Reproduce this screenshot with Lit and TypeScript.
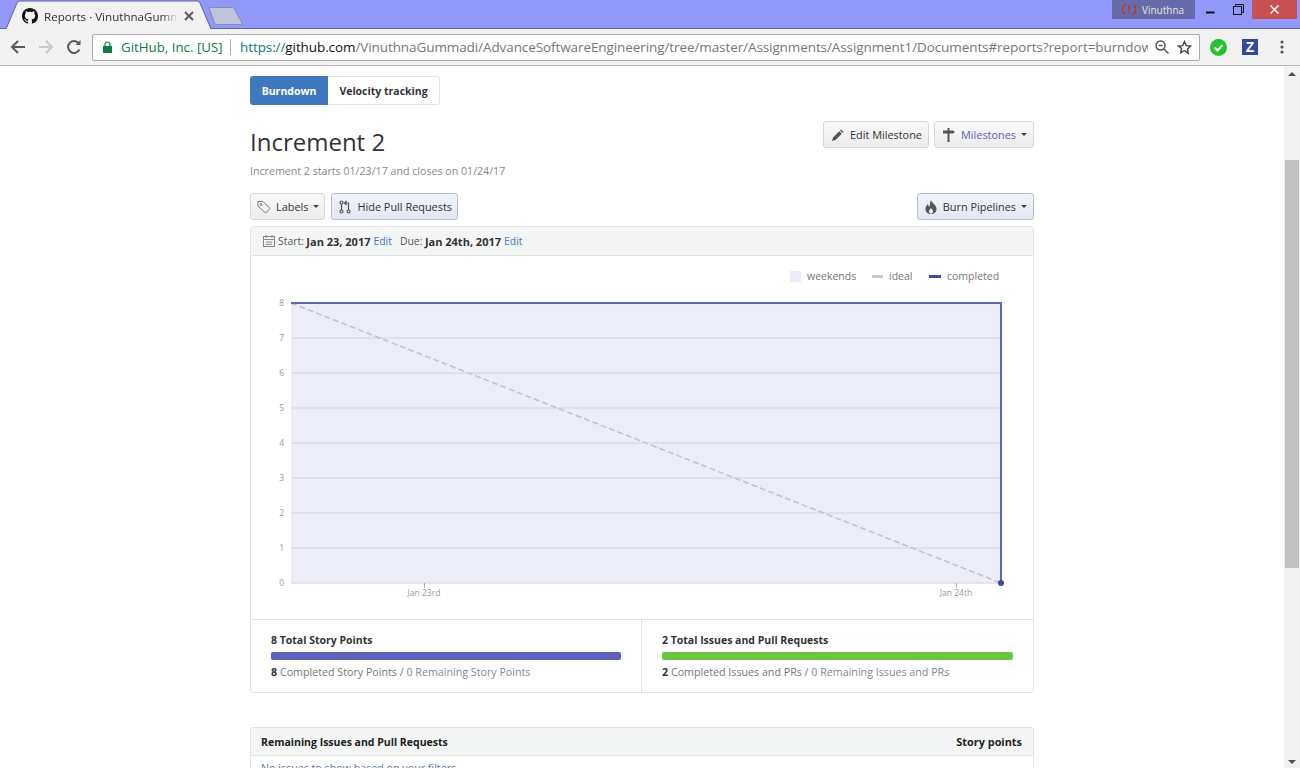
import { LitElement, html, css, svg } from 'lit';
import { customElement } from 'lit/decorators.js';

@customElement('browser-chrome')
export class BrowserChrome extends LitElement {
  static styles = css`
    :host {
      display: block;
      font-family: 'Open Sans', 'Noto Sans', sans-serif;
    }
    .titlebar {
      height: 28px;
      background: #9297fa;
      border-bottom: 1px solid #5c61a8;
      display: flex;
      position: relative;
    }
    .tab {
      position: relative;
      width: 205px;
      height: 29px;
      margin-left: 6px;
      display: flex;
      align-items: center;
      padding: 3px 0 0 16px;
      box-sizing: border-box;
      z-index: 1;
    }
    .tab-shape {
      position: absolute;
      left: 0;
      top: 0;
    }
    .gh {
      position: relative;
      width: 16px;
      height: 16px;
      margin-right: 6px;
      flex: none;
    }
    .tab-title {
      position: relative;
      width: 134px;
      overflow: hidden;
      white-space: nowrap;
      font-size: 11.6px;
      color: #333;
      -webkit-mask-image: linear-gradient(90deg, #000 88%, transparent);
      mask-image: linear-gradient(90deg, #000 88%, transparent);
    }
    .tab-close {
      position: relative;
      margin-left: 6px;
      width: 10px;
      height: 10px;
    }
    .newtab {
      margin: 6px 0 0 -3px;
      width: 36px;
      height: 20px;
    }
    .spacer {
      flex: 1;
    }
    .profile {
      width: 83px;
      height: 19px;
      background: #666ba9;
      color: #e4e4e4;
      font-size: 10px;
      display: flex;
      align-items: center;
      padding-left: 10px;
      box-sizing: border-box;
      gap: 6px;
    }
    .win {
      display: flex;
      align-items: flex-start;
      height: 19px;
      margin-right: 3px;
    }
    .win-btn {
      height: 19px;
      display: flex;
      align-items: center;
      justify-content: center;
    }
    .min {
      width: 30px;
    }
    .restore {
      width: 27px;
    }
    .close {
      width: 45px;
      background: #c75050;
    }
    .toolbar {
      height: 36px;
      background: #f2f2f2;
      border-bottom: 1px solid #b8b8b8;
      display: flex;
      align-items: center;
    }
    .nav {
      width: 28px;
      height: 28px;
      display: flex;
      align-items: center;
      justify-content: center;
    }
    .navs {
      display: flex;
      margin-left: 4px;
    }
    .omni {
      margin-left: 4px;
      width: 1108px;
      flex: none;
      height: 27px;
      background: #fff;
      border: 1px solid #a9a9a9;
      border-radius: 2px;
      box-sizing: border-box;
      display: flex;
      align-items: center;
      padding-left: 10px;
      font-size: 13.5px;
      white-space: nowrap;
    }
    .secure {
      color: #0b8043;
      margin-left: 9px;
      width: 101px;
      font-size: 13.3px;
    }
    .sep {
      width: 1px;
      height: 16px;
      background: #b0b0b0;
      margin: 0 9px 0 8px;
    }
    .url {
      width: 908px;
      overflow: hidden;
      color: #777;
      letter-spacing: -0.09px;
    }
    .url .scheme {
      color: #0b7a6f;
    }
    .url b {
      font-weight: 400;
      color: #111;
    }
    .omni-icons {
      display: flex;
      align-items: center;
      gap: 8px;
      margin-left: 7px;
    }
    .ext {
      display: flex;
      align-items: center;
      margin-left: 10px;
      gap: 15px;
    }
    .zbox {
      width: 16px;
      height: 16px;
      background: #33479b;
      color: #fff;
      font: bold 14px/16px 'Liberation Sans', sans-serif;
      text-align: center;
    }
    .dots {
      margin-left: 7px;
    }
  `;

  render() {
    return html`
      <div class="titlebar">
        <div class="tab">
          <svg class="tab-shape" width="205" height="29" viewBox="0 0 205 29">
            <path d="M0 29 L11 3 Q12 1 14 1 H191 Q193 1 194 3 L205 29" fill="#f2f2f2" stroke="#5c61a8" />
          </svg>
          <svg class="gh" viewBox="0 0 16 16" fill="#111">
            <path
              d="M8 0C3.58 0 0 3.58 0 8c0 3.54 2.29 6.53 5.47 7.59.4.07.55-.17.55-.38 0-.19-.01-.82-.01-1.49-2.01.37-2.53-.49-2.69-.94-.09-.23-.48-.94-.82-1.13-.28-.15-.68-.52-.01-.53.63-.01 1.08.58 1.23.82.72 1.21 1.87.87 2.33.66.07-.52.28-.87.51-1.07-1.78-.2-3.64-.89-3.64-3.95 0-.87.31-1.59.82-2.15-.08-.2-.36-1.02.08-2.12 0 0 .67-.21 2.2.82.64-.18 1.32-.27 2-.27.68 0 1.36.09 2 .27 1.53-1.04 2.2-.82 2.2-.82.44 1.1.16 1.92.08 2.12.51.56.82 1.27.82 2.15 0 3.07-1.87 3.75-3.65 3.95.29.25.54.73.54 1.48 0 1.07-.01 1.93-.01 2.2 0 .21.15.46.55.38A8.013 8.013 0 0016 8c0-4.42-3.58-8-8-8z"
            />
          </svg>
          <span class="tab-title">Reports · VinuthnaGummadi</span>
          <svg class="tab-close" viewBox="0 0 10 10" stroke="#555" stroke-width="1.8">
            <path d="M1 1l8 8M9 1l-8 8" />
          </svg>
        </div>
        <svg class="newtab" viewBox="0 0 36 20">
          <path
            d="M1 1.5 H24 Q25.5 1.5 26.5 3 L34 17 Q34.5 18.5 33 18.5 H9 Q7.5 18.5 6.5 17 Z"
            fill="#c0c3dc"
            stroke="#8a8cb8"
          />
        </svg>
        <div class="spacer"></div>
        <div class="profile">
          <svg width="14" height="13" viewBox="0 0 14 13" fill="none" stroke="#c2352c" stroke-width="1.6">
            <path d="M4.5 1.5 A5 5 0 0 0 3 11 M9.5 11.5 A5 5 0 0 0 11 2" />
            <path d="M7 2.5v5M7 9v1.5" />
          </svg>
          <span>Vinuthna</span>
        </div>
        <div class="win">
          <div class="win-btn min">
            <svg width="9" height="9" viewBox="0 0 9 9"><path d="M0 7.5h8.5" stroke="#111" stroke-width="2" /></svg>
          </div>
          <div class="win-btn restore">
            <svg width="11" height="11" viewBox="0 0 11 11" fill="none" stroke="#111">
              <rect x="0.5" y="2.5" width="8" height="8" />
              <path d="M2.5 2.5v-2h8v8h-2" />
            </svg>
          </div>
          <div class="win-btn close">
            <svg width="9" height="9" viewBox="0 0 9 9" stroke="#fff" stroke-width="1.5"><path d="M.5.5l8 8M8.5.5l-8 8" /></svg>
          </div>
        </div>
      </div>
      <div class="toolbar">
        <div class="navs">
          <div class="nav">
            <svg width="16" height="16" viewBox="0 0 16 16" fill="none" stroke="#5a5a5a" stroke-width="2">
              <path d="M15 8H2M8 2L2 8l6 6" />
            </svg>
          </div>
          <div class="nav">
            <svg width="16" height="16" viewBox="0 0 16 16" fill="none" stroke="#c8c8c8" stroke-width="2">
              <path d="M1 8h13M8 2l6 6-6 6" />
            </svg>
          </div>
          <div class="nav">
            <svg width="16" height="16" viewBox="0 0 16 16" fill="none" stroke="#5a5a5a" stroke-width="2">
              <path d="M13.5 10.5A6 6 0 1 1 13 4.5" />
              <path d="M14.5 1v5h-5z" fill="#5a5a5a" stroke="none" />
            </svg>
          </div>
        </div>
        <div class="omni">
          <svg width="9" height="12" viewBox="0 0 9 12">
            <path d="M2 5V3.5a2.5 2.5 0 0 1 5 0V5" fill="none" stroke="#0b8043" stroke-width="1.2" />
            <rect y="5" width="9" height="7" fill="#0b8043" />
          </svg>
          <span class="secure">GitHub, Inc. [US]</span>
          <span class="sep"></span>
          <span class="url"
            ><span class="scheme">https://</span><b>github.com</b
            >/VinuthnaGummadi/AdvanceSoftwareEngineering/tree/master/Assignments/Assignment1/Documents#reports?report=burndown-chart</span
          >
          <span class="omni-icons">
            <svg width="14" height="14" viewBox="0 0 14 14" fill="none" stroke="#555" stroke-width="1.5">
              <circle cx="5.5" cy="5.5" r="4.5" />
              <path d="M9 9l4.5 4.5M3.5 5.5h4" />
            </svg>
            <svg width="15" height="15" viewBox="0 0 24 24" fill="none" stroke="#444" stroke-width="2.2">
              <path d="M12 2.5l2.9 6.4 7 .8-5.2 4.7 1.4 6.9L12 16.8l-6.1 3.5 1.4-6.9L2.1 9.7l7-.8z" />
            </svg>
          </span>
        </div>
        <div class="ext">
          <svg width="17" height="17" viewBox="0 0 17 17">
            <circle cx="8.5" cy="8.5" r="8.5" fill="#22c32c" />
            <path d="M4.5 8.5l3 3 5-5.500" fill="none" stroke="#fff" stroke-width="2" />
          </svg>
          <div class="zbox">Z</div>
          <svg class="dots" width="4" height="14" viewBox="0 0 4 14" fill="#555">
            <circle cx="2" cy="2" r="1.6" /><circle cx="2" cy="7" r="1.6" /><circle cx="2" cy="12" r="1.6" />
          </svg>
        </div>
      </div>
    `;
  }
}

const W = 782;
const plot = { x0: 40, x1: 750, y0: 47, y1: 327 };

@customElement('burndown-chart')
export class BurndownChart extends LitElement {
  static styles = css`
    :host {
      display: block;
      height: 363px;
    }
    svg {
      display: block;
    }
    text {
      font-family: 'Open Sans', 'Noto Sans', sans-serif;
    }
    .axis {
      font-size: 8.5px;
      fill: #999;
    }
    .legend {
      font-size: 10.5px;
      fill: #777;
    }
  `;

  render() {
    const step = (plot.y1 - plot.y0) / 8;
    const rows = [0, 1, 2, 3, 4, 5, 6, 7, 8];
    return html`
      <svg width=${W} height="363" viewBox="0 0 ${W} 363">
        <rect x="539" y="15" width="11" height="11" rx="1" fill="#e9ebf7" />
        <text class="legend" x="556" y="24">weekends</text>
        <rect x="621" y="19" width="11" height="3" fill="#c9c9c9" />
        <text class="legend" x="638" y="24">ideal</text>
        <rect x="678" y="19" width="12" height="3" fill="#3f4d9c" />
        <text class="legend" x="696" y="24">completed</text>

        <rect x=${plot.x0} y=${plot.y0} width=${plot.x1 - plot.x0} height=${plot.y1 - plot.y0} fill="#ecedf6" />
        ${rows.map((v) => {
          const y = plot.y1 - v * step;
          return svg`
            ${v > 0 && v < 8 ? svg`<line x1=${plot.x0} x2=${plot.x1} y1=${y} y2=${y} stroke="#dfe0ea" stroke-width="2" />` : ''}
            <text class="axis" x="33" y=${y + 3} text-anchor="end">${v}</text>
          `;
        })}
        <line x1=${plot.x0} x2=${plot.x1} y1=${plot.y1} y2=${plot.y1} stroke="#dcdde8" stroke-width="1.5" />
        <line x1="173.5" x2="173.5" y1=${plot.y1} y2=${plot.y1 + 5} stroke="#aaa" />
        <line x1="705.5" x2="705.5" y1=${plot.y1} y2=${plot.y1 + 5} stroke="#aaa" />
        <text class="axis" x="173" y="340" text-anchor="middle">Jan 23rd</text>
        <text class="axis" x="705" y="340" text-anchor="middle">Jan 24th</text>
        <line x1=${plot.x0} y1=${plot.y0} x2=${plot.x1} y2=${plot.y1} stroke="#c2c1d2" stroke-width="1.5" stroke-dasharray="6 3" />
        <path d="M${plot.x0} ${plot.y0} H${plot.x1} V${plot.y1}" fill="none" stroke="#5f66b5" stroke-width="2" />
        <circle cx=${plot.x1} cy=${plot.y1} r="3" fill="#3f4d9c" />
      </svg>
    `;
  }
}

@customElement('app-root')
export class AppRoot extends LitElement {
  static styles = css`
    :host {
      display: block;
      height: 768px;
      overflow: hidden;
      background: #fff;
      font-family: 'Open Sans', 'Noto Sans', sans-serif;
      color: #333;
    }
    .viewport {
      display: flex;
      height: 702px;
    }
    .page {
      flex: 1;
      overflow: hidden;
    }
    .scrollbar {
      width: 16px;
      background: #f1f1f1;
      display: flex;
      flex-direction: column;
      align-items: center;
    }
    .arrow {
      width: 0;
      height: 0;
      border-left: 4px solid transparent;
      border-right: 4px solid transparent;
      margin-top: 6px;
    }
    .arrow.up {
      border-bottom: 4px solid #505050;
    }
    .arrow.down {
      border-top: 4px solid #505050;
      margin-top: auto;
      margin-bottom: 4px;
    }
    .thumb {
      width: 14px;
      height: 408px;
      margin-top: 84px;
      background: #c1c1c1;
    }
    .content {
      width: 784px;
      margin-left: 250px;
      padding-top: 10px;
    }
    .tabs {
      display: flex;
      height: 29px;
      font-size: 10.5px;
      font-weight: 700;
    }
    .tabs div {
      display: flex;
      align-items: center;
      box-sizing: border-box;
      justify-content: center;
    }
    .tabs .on {
      width: 78px;
      background: #3f78bf;
      color: #fff;
      border-radius: 3px 0 0 3px;
    }
    .tabs .off {
      width: 112px;
      border: 1px solid #e5e5e5;
      border-left: 0;
      border-radius: 0 3px 3px 0;
      color: #333;
    }
    .heading {
      display: flex;
      justify-content: space-between;
      margin-top: 16px;
    }
    h1 {
      margin: 3px 0 0;
      font-size: 24px;
      font-weight: 400;
      line-height: 36px;
      color: #333;
    }
    .sub {
      margin-top: 3px;
      font-size: 10.65px;
      color: #888;
      line-height: 16px;
    }
    .row {
      display: flex;
      gap: 5px;
      align-items: flex-start;
    }
    .filters .row {
      gap: 6px;
    }
    .btn {
      display: flex;
      align-items: center;
      height: 27px;
      box-sizing: border-box;
      padding: 0 6px;
      gap: 5px;
      border: 1px solid #d8d8d8;
      border-radius: 3px;
      background: linear-gradient(#fafafa, #ececec);
      font-size: 10.9px;
      color: #333;
      white-space: nowrap;
    }
    .filters .row .btn {
      padding-right: 5px;
    }
    .btn.active {
      background: linear-gradient(#f2f4fa, #e2e7f3);
      border-color: #b8c0d0;
    }
    .milestones {
      color: #6161b8;
    }
    .caret {
      width: 0;
      height: 0;
      border-left: 3px solid transparent;
      border-right: 3px solid transparent;
      border-top: 3px solid #444;
    }
    .filters {
      display: flex;
      justify-content: space-between;
      margin-top: 14px;
    }
    .panel {
      margin-top: 6px;
      border: 1px solid #e3e3e3;
      border-radius: 3px;
      box-sizing: border-box;
    }
    .panel-head {
      height: 28px;
      background: #f4f5f5;
      border-bottom: 1px solid #e3e3e3;
      display: flex;
      align-items: center;
      font-size: 10.4px;
      color: #555;
      padding-left: 12px;
    }
    .panel-head svg {
      margin-right: 3px;
    }
    .panel-head b {
      color: #333;
      margin: 0 3px 0 2.5px;
      font-size: 11px;
    }
    a {
      color: #4078c0;
      text-decoration: none;
    }
    .due {
      margin-left: 8px;
    }
    .stats {
      display: grid;
      grid-template-columns: 390px 1fr;
      border-top: 1px solid #e3e3e3;
      height: 73px;
      box-sizing: border-box;
    }
    .stat {
      padding: 13px 20px 0;
      font-size: 10.7px;
      color: #777;
    }
    .stat + .stat {
      border-left: 1px solid #e3e3e3;
    }
    .stat .title {
      font-size: 10.5px;
      font-weight: 700;
      color: #333;
      line-height: 15px;
    }
    .bar {
      height: 8px;
      border-radius: 2px;
      margin: 4px 0 5px;
    }
    .bar.points {
      background: #5f5fb8;
    }
    .bar.issues {
      background: #6cc644;
    }
    .stat .line {
      line-height: 15px;
    }
    .stat b {
      color: #333;
    }
    .stat .rest {
      color: #7d8a96;
    }
    .remaining {
      margin-top: 34px;
      border: 1px solid #e3e3e3;
      border-radius: 3px;
      border-bottom: 0;
    }
    .remaining-head {
      height: 27px;
      background: #f4f5f5;
      border-bottom: 1px solid #e3e3e3;
      display: flex;
      align-items: center;
      justify-content: space-between;
      padding: 0 11px 0 10px;
      font-size: 10.5px;
      font-weight: 700;
      color: #222;
    }
    .points-col {
      font-size: 10.9px;
    }
    .empty {
      padding: 5px 11px 5px 10px;
      font-size: 10.7px;
      line-height: 15px;
      color: #5a7aa0;
    }
  `;

  render() {
    return html`
      <browser-chrome></browser-chrome>
      <div class="viewport">
        <div class="page">
          <div class="content">
            <div class="tabs">
              <div class="on">Burndown</div>
              <div class="off">Velocity tracking</div>
            </div>
            <div class="heading">
              <div>
                <h1>Increment 2</h1>
                <div class="sub">Increment 2 starts 01/23/17 and closes on 01/24/17</div>
              </div>
              <div class="row">
                <div class="btn">
                  <svg width="15" height="14" viewBox="0 0 15 14" fill="#555">
                    <path d="M11 1.5l2.5 2.5-1 1-2.5-2.5zM9.3 3.2l2.5 2.5L5.5 12 2 13l1-3.5z" />
                  </svg>
                  Edit Milestone
                </div>
                <div class="btn">
                  <svg width="15" height="14" viewBox="0 0 15 14" fill="#555">
                    <path d="M6.5 0h2v2.5H12L14 4 12 5.5H8.500V14h-2V5.500H2V2.500h4.500z" />
                  </svg>
                  <span class="milestones">Milestones</span><i class="caret"></i>
                </div>
              </div>
            </div>
            <div class="filters">
              <div class="row">
                <div class="btn">
                  <svg width="14" height="14" viewBox="0 0 14 14" fill="none" stroke="#777">
                    <path d="M1 1.5h5l7 7-4.5 4.5-7.5-7z" /><circle cx="4" cy="4.5" r="1" />
                  </svg>
                  Labels<i class="caret"></i>
                </div>
                <div class="btn active">
                  <svg width="14" height="14" viewBox="0 0 14 14" fill="none" stroke="#555" stroke-width="1.2">
                    <circle cx="3.5" cy="2.5" r="1.5" /><circle cx="3.5" cy="11.5" r="1.5" /><circle cx="10.5" cy="11.5" r="1.5" />
                    <path d="M3.5 4v6M10.500 10V3H7M8.500 1L6.500 3l2 2" />
                  </svg>
                  Hide Pull Requests
                </div>
              </div>
              <div class="btn active">
                <svg width="14" height="14" viewBox="0 0 14 14" fill="#555">
                  <path
                    d="M7 0c.5 2.5 5.5 5 5.5 9 0 3-2.5 5-5.5 5s-5.5-2-5.500-5c0-2.500 1.500-4 2.500-5 0 1.500.5 2.500 1.500 2.500C6 4.500 6 2 7 0zM7 8c-1 1.500-2.500 2.500-2 4 .3 1 1 1.500 2 1.500s1.700-.5 2-1.500c.5-1.500-1-2.500-2-4z"
                    fill-rule="evenodd"
                  />
                </svg>
                Burn Pipelines<i class="caret"></i>
              </div>
            </div>
            <div class="panel">
              <div class="panel-head">
                <svg width="12" height="12" viewBox="0 0 12 12" fill="none" stroke="#888">
                  <rect x="0.5" y="1.5" width="11" height="10" />
                  <path d="M0 4.5h12M3 0v3M9 0v3M3 7h6M3 9.300h6" />
                </svg>
                Start:<b>Jan 23, 2017</b><a href="#">Edit</a>
                <span class="due">Due:</span><b>Jan 24th, 2017</b><a href="#">Edit</a>
              </div>
              <burndown-chart></burndown-chart>
              <div class="stats">
                <div class="stat">
                  <div class="title">8 Total Story Points</div>
                  <div class="bar points"></div>
                  <div class="line"><b>8</b> Completed Story Points / <span class="rest">0 Remaining Story Points</span></div>
                </div>
                <div class="stat">
                  <div class="title">2 Total Issues and Pull Requests</div>
                  <div class="bar issues"></div>
                  <div class="line"><b>2</b> Completed Issues and PRs / <span class="rest">0 Remaining Issues and PRs</span></div>
                </div>
              </div>
            </div>
            <div class="remaining">
              <div class="remaining-head">
                <span>Remaining Issues and Pull Requests</span><span class="points-col">Story points</span>
              </div>
              <div class="empty">No issues to show based on your filters</div>
            </div>
          </div>
        </div>
        <div class="scrollbar">
          <i class="arrow up"></i>
          <div class="thumb"></div>
          <i class="arrow down"></i>
        </div>
      </div>
    `;
  }
}
